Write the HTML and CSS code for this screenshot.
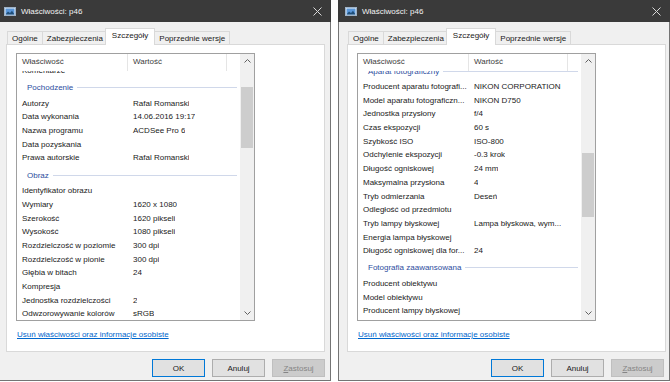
FILE: index.html
```html
<!DOCTYPE html>
<html lang="pl">
<head>
    <meta charset="UTF-8">
    <title>Właściwości: p46</title>
    <link rel="stylesheet" href="styles.css">
</head>
<body>

<div class="desk">

    <!-- Okno 1: Pochodzenie / Obraz -->
    <div class="dialog dialog-left">
        <div class="titlebar">
            <svg class="app-icon" width="12" height="9" viewBox="0 0 12 9"><rect x="0.5" y="0.5" width="11" height="8" fill="#e9eef3" stroke="#9fb3c8"/><rect x="1.5" y="1.5" width="9" height="6" fill="#5a97da"/><path d="M1.5 7.5 L4 4.5 L6 6 L8 3.8 L10.5 7.5Z" fill="#1f4f7a"/></svg>
            <span class="title">Właściwości: p46</span>
            <svg class="close" width="9" height="9" viewBox="0 0 9 9"><path d="M0.5 0.5 L8.5 8.5 M8.5 0.5 L0.5 8.5" stroke="#d8d8d8" stroke-width="1"/></svg>
        </div>
        <div class="tabs">
            <div class="tab">Ogólne</div>
            <div class="tab">Zabezpieczenia</div>
            <div class="tab active">Szczegóły</div>
            <div class="tab">Poprzednie wersje</div>
        </div>
        <div class="panel">
            <div class="listview">
                <div class="lv-main">
                    <div class="lv-header">
                        <div class="col col-name">Właściwość</div>
                        <div class="col col-value">Wartość</div>
                        <div class="col col-rest"></div>
                    </div>
                    <div class="lv-body">
                        <div class="lv-rows rows-left">
                            <div class="row"><span class="name">Komentarze</span><span class="value"></span></div>
                            <div class="group"><span>Pochodzenie</span></div>
                            <div class="row"><span class="name">Autorzy</span><span class="value">Rafal Romanski</span></div>
                            <div class="row"><span class="name">Data wykonania</span><span class="value">14.06.2016 19:17</span></div>
                            <div class="row"><span class="name">Nazwa programu</span><span class="value">ACDSee Pro 6</span></div>
                            <div class="row"><span class="name">Data pozyskania</span><span class="value"></span></div>
                            <div class="row"><span class="name">Prawa autorskie</span><span class="value">Rafal Romanski</span></div>
                            <div class="group"><span>Obraz</span></div>
                            <div class="row"><span class="name">Identyfikator obrazu</span><span class="value"></span></div>
                            <div class="row"><span class="name">Wymiary</span><span class="value">1620 x 1080</span></div>
                            <div class="row"><span class="name">Szerokość</span><span class="value">1620 pikseli</span></div>
                            <div class="row"><span class="name">Wysokość</span><span class="value">1080 pikseli</span></div>
                            <div class="row"><span class="name">Rozdzielczość w poziomie</span><span class="value">300 dpi</span></div>
                            <div class="row"><span class="name">Rozdzielczość w pionie</span><span class="value">300 dpi</span></div>
                            <div class="row"><span class="name">Głębia w bitach</span><span class="value">24</span></div>
                            <div class="row"><span class="name">Kompresja</span><span class="value"></span></div>
                            <div class="row"><span class="name">Jednostka rozdzielczości</span><span class="value">2</span></div>
                            <div class="row"><span class="name">Odwzorowywanie kolorów</span><span class="value">sRGB</span></div>
                        </div>
                    </div>
                </div>
                <div class="scrollbar">
                    <div class="sb-btn"><svg width="7" height="4" viewBox="0 0 7 4"><path d="M0.5 3.5 L3.5 0.5 L6.5 3.5" fill="none" stroke="#606060"/></svg></div>
                    <div class="sb-track"><div class="sb-thumb thumb-left"></div></div>
                    <div class="sb-btn"><svg width="7" height="4" viewBox="0 0 7 4"><path d="M0.5 0.5 L3.5 3.5 L6.5 0.5" fill="none" stroke="#606060"/></svg></div>
                </div>
            </div>
            <a class="link" href="#">Usuń właściwości oraz informacje osobiste</a>
        </div>
        <div class="footer">
            <button class="btn btn-default">OK</button>
            <button class="btn">Anuluj</button>
            <button class="btn btn-disabled"><u>Z</u>astosuj</button>
        </div>
    </div>

    <!-- Okno 2: Aparat fotograficzny -->
    <div class="dialog dialog-right">
        <div class="titlebar">
            <svg class="app-icon" width="12" height="9" viewBox="0 0 12 9"><rect x="0.5" y="0.5" width="11" height="8" fill="#e9eef3" stroke="#9fb3c8"/><rect x="1.5" y="1.5" width="9" height="6" fill="#5a97da"/><path d="M1.5 7.5 L4 4.5 L6 6 L8 3.8 L10.5 7.5Z" fill="#1f4f7a"/></svg>
            <span class="title">Właściwości: p46</span>
            <svg class="close" width="9" height="9" viewBox="0 0 9 9"><path d="M0.5 0.5 L8.5 8.5 M8.5 0.5 L0.5 8.5" stroke="#d8d8d8" stroke-width="1"/></svg>
        </div>
        <div class="tabs">
            <div class="tab">Ogólne</div>
            <div class="tab">Zabezpieczenia</div>
            <div class="tab active">Szczegóły</div>
            <div class="tab">Poprzednie wersje</div>
        </div>
        <div class="panel">
            <div class="listview">
                <div class="lv-main">
                    <div class="lv-header">
                        <div class="col col-name">Właściwość</div>
                        <div class="col col-value">Wartość</div>
                        <div class="col col-rest"></div>
                    </div>
                    <div class="lv-body">
                        <div class="lv-rows rows-right">
                            <div class="group"><span>Aparat fotograficzny</span></div>
                            <div class="row"><span class="name">Producent aparatu fotografi...</span><span class="value">NIKON CORPORATION</span></div>
                            <div class="row"><span class="name">Model aparatu fotograficzn...</span><span class="value">NIKON D750</span></div>
                            <div class="row"><span class="name">Jednostka przysłony</span><span class="value">f/4</span></div>
                            <div class="row"><span class="name">Czas ekspozycji</span><span class="value">60 s</span></div>
                            <div class="row"><span class="name">Szybkość ISO</span><span class="value">ISO-800</span></div>
                            <div class="row"><span class="name">Odchylenie ekspozycji</span><span class="value">-0.3 krok</span></div>
                            <div class="row"><span class="name">Długość ogniskowej</span><span class="value">24 mm</span></div>
                            <div class="row"><span class="name">Maksymalna przysłona</span><span class="value">4</span></div>
                            <div class="row"><span class="name">Tryb odmierzania</span><span class="value">Deseń</span></div>
                            <div class="row"><span class="name">Odległość od przedmiotu</span><span class="value"></span></div>
                            <div class="row"><span class="name">Tryb lampy błyskowej</span><span class="value">Lampa błyskowa, wym...</span></div>
                            <div class="row"><span class="name">Energia lampa błyskowej</span><span class="value"></span></div>
                            <div class="row"><span class="name">Długość ogniskowej dla for...</span><span class="value">24</span></div>
                            <div class="group"><span>Fotografia zaawansowana</span></div>
                            <div class="row"><span class="name">Producent obiektywu</span><span class="value"></span></div>
                            <div class="row"><span class="name">Model obiektywu</span><span class="value"></span></div>
                            <div class="row"><span class="name">Producent lampy błyskowej</span><span class="value"></span></div>
                            <div class="row"><span class="name">Model lampy błyskowej</span><span class="value"></span></div>
                        </div>
                    </div>
                </div>
                <div class="scrollbar">
                    <div class="sb-btn"><svg width="7" height="4" viewBox="0 0 7 4"><path d="M0.5 3.5 L3.5 0.5 L6.5 3.5" fill="none" stroke="#606060"/></svg></div>
                    <div class="sb-track"><div class="sb-thumb thumb-right"></div></div>
                    <div class="sb-btn"><svg width="7" height="4" viewBox="0 0 7 4"><path d="M0.5 0.5 L3.5 3.5 L6.5 0.5" fill="none" stroke="#606060"/></svg></div>
                </div>
            </div>
            <a class="link" href="#">Usuń właściwości oraz informacje osobiste</a>
        </div>
        <div class="footer">
            <button class="btn btn-default">OK</button>
            <button class="btn">Anuluj</button>
            <button class="btn btn-disabled"><u>Z</u>astosuj</button>
        </div>
    </div>

</div>

</body>
</html>
```

FILE: styles.css
```css
body {
    margin: 0;
    width: 670px;
    height: 382px;
    overflow: hidden;
    background-color: #ffffff;
    font-family: "Liberation Sans", Arial, sans-serif;
    font-size: 8px;
    color: #1a1a1a;
}
.desk {
    display: flex;
    gap: 7px;
}
.dialog {
    flex-shrink: 0;
    width: 332px;
    height: 381px;
    box-sizing: border-box;
    border: 1px solid #747474;
    border-top: none;
    background-color: #f0f0f0;
    display: flex;
    flex-direction: column;
}
.dialog-left {
    width: 334px;
    margin-left: -3px;
}

/* pasek tytułu */
.titlebar {
    height: 22px;
    flex-shrink: 0;
    background-color: #3a3a3a;
    display: flex;
    align-items: center;
    padding: 0 9px 0 7px;
    margin: 0 -1px;
}
.app-icon {
    margin-right: 5px;
}
.title {
    color: #f2f2f2;
    padding-top: 1px;
}
.close {
    margin-left: auto;
}

/* zakładki */
.tabs {
    height: 22px;
    display: flex;
    align-items: flex-end;
    padding-left: 9px;
}
.tab {
    height: 13px;
    line-height: 13px;
    box-sizing: border-box;
    padding: 0 4px;
    border: 1px solid #d9d9d9;
    border-bottom: none;
    margin-right: -1px;
    background-color: #f0f0f0;
    color: #1a1a1a;
}
.tab.active {
    position: relative;
    z-index: 1;
    height: 17px;
    line-height: 14px;
    margin: 0 -1px -1px -2px;
    padding: 0 6px;
    background-color: #ffffff;
}

/* panel zakładki */
.panel {
    margin-left: 8px;
    width: 319px;
    height: 308px;
    box-sizing: border-box;
    border: 1px solid #d9d9d9;
    background-color: #ffffff;
    padding: 8px 0 0 9px;
}

/* lista właściwości */
.listview {
    width: 239px;
    height: 268px;
    box-sizing: border-box;
    border: 1px solid #a0a0a0;
    display: flex;
}
.lv-main {
    flex: 1;
    min-width: 0;
    display: flex;
    flex-direction: column;
}
.lv-header {
    height: 17px;
    flex-shrink: 0;
    display: flex;
    background-color: #ffffff;
    color: #3c3c3c;
}
.col {
    box-sizing: border-box;
    line-height: 15px;
    padding-left: 5px;
    border-right: 1px solid #e5e5e5;
}
.col-name {
    width: 111px;
}
.col-value {
    width: 99px;
}
.col-rest {
    flex: 1;
    border-right: none;
}
.lv-body {
    flex: 1;
    overflow: hidden;
}
.rows-left {
    margin-top: -7px;
}
.rows-right {
    margin-top: -10px;
}
.row {
    display: flex;
    height: 13.7px;
    line-height: 13.7px;
    white-space: nowrap;
}
.name {
    width: 111px;
    flex-shrink: 0;
    box-sizing: border-box;
    padding-left: 5px;
    overflow: hidden;
}
.value {
    padding-left: 5px;
    overflow: hidden;
}
.group {
    height: 19px;
    box-sizing: border-box;
    padding: 1px 3px 0 10px;
    display: flex;
    align-items: center;
    gap: 4px;
    color: #2c4d9e;
    white-space: nowrap;
}
.group::after {
    content: "";
    flex: 1;
    height: 1px;
    background-color: #d0d8ea;
}

/* pasek przewijania */
.scrollbar {
    width: 14px;
    flex-shrink: 0;
    background-color: #f0f0f0;
    display: flex;
    flex-direction: column;
}
.sb-btn {
    height: 14px;
    display: flex;
    align-items: center;
    justify-content: center;
}
.sb-track {
    flex: 1;
}
.sb-thumb {
    margin: 0 1px;
    background-color: #cdcdcd;
}
.thumb-left {
    margin-top: 19px;
    height: 61px;
}
.thumb-right {
    margin-top: 85px;
    height: 64px;
}

.link {
    display: block;
    margin: 8px 0 0 1px;
    line-height: 12px;
    color: #0066cc;
    text-decoration: underline;
    width: max-content;
}

/* przyciski */
.footer {
    display: flex;
    justify-content: flex-end;
    gap: 7px;
    padding: 7px 5px 0 0;
}
.btn {
    width: 53px;
    height: 18px;
    padding: 0;
    box-sizing: border-box;
    border: 1px solid #adadad;
    background-color: #e1e1e1;
    font-family: "Liberation Sans", Arial, sans-serif;
    font-size: 8px;
    color: #1a1a1a;
}
.btn-default {
    border-color: #0078d7;
}
.btn-disabled {
    background-color: #cccccc;
    border-color: #bfbfbf;
    color: #858585;
}
```
